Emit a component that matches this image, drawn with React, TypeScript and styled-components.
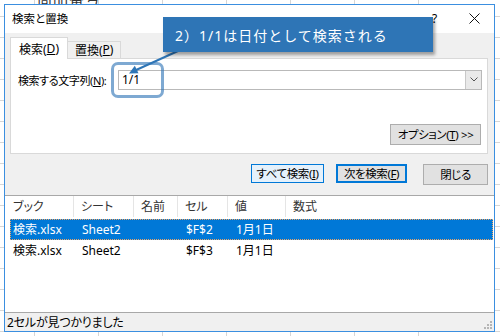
import styled, { createGlobalStyle } from 'styled-components'

const GlobalStyle = createGlobalStyle`
  html, body {
    margin: 0;
    height: 100%;
  }
  body {
    font-family: "Noto Sans", "Noto Sans CJK JP", sans-serif;
    font-feature-settings: "palt";
    font-size: 12px;
    color: #000;
    background-color: #fff;
    background-image:
      repeating-linear-gradient(to right, transparent 0 63px, #d6d6d6 63px 64px),
      repeating-linear-gradient(to bottom, transparent 0 20px, #d6d6d6 20px 21px);
    background-position: -29px 0, 0 -4px;
  }
`

const Sheet = styled.div`
  position: relative;
  width: 500px;
  height: 336px;
  overflow: hidden;
  padding: 4px 0 0 4px;
  box-sizing: border-box;
`

const CellText = styled.div`
  position: absolute;
  top: -13px;
  left: 37px;
  font-size: 15px;
  color: #333;
  letter-spacing: 1px;
`

const Dialog = styled.div`
  position: relative;
  width: 491px;
  height: 328px;
  box-sizing: border-box;
  border: 1px solid #3b8fe0;
  background: #f0f0f0;
  display: flex;
  flex-direction: column;
`

const TitleBar = styled.div`
  height: 28px;
  flex: none;
  background: #fff;
  display: flex;
  align-items: center;
  padding: 0 14px 2px 7px;
  box-sizing: border-box;
`

const Title = styled.div`
  flex: 1;
  font-size: 11.5px;
`

const Help = styled.div`
  width: 37px;
  font-size: 12px;
`

const Body = styled.div`
  flex: 1;
  display: flex;
  flex-direction: column;
  min-height: 0;
  letter-spacing: -0.4px;
`

const Tabs = styled.div`
  display: flex;
  align-items: flex-end;
  height: 26px;
  padding-left: 5px;
  position: relative;
  z-index: 1;
`

const Tab = styled.div<{ $active?: boolean }>`
  box-sizing: border-box;
  height: ${(p) => (p.$active ? '22px' : '18px')};
  padding: 0 ${(p) => (p.$active ? '8px' : '7px')};
  border: 1px solid #d9d9d9;
  border-bottom: ${(p) => (p.$active ? 'none' : '1px solid #d9d9d9')};
  border-left: ${(p) => (p.$active ? '1px solid #d9d9d9' : 'none')};
  background: ${(p) => (p.$active ? '#fff' : '#f0f0f0')};
  display: flex;
  align-items: center;
  padding-top: ${(p) => (p.$active ? '1px' : '0')};
  letter-spacing: 0;
`

const Panel = styled.div`
  margin: -1px 6px 0 5px;
  height: 97px;
  box-sizing: border-box;
  border: 1px solid #d9d9d9;
  background: #fff;
  padding: 11px 5px 0 7px;
  display: flex;
  flex-direction: column;
`

const FieldRow = styled.div`
  display: flex;
  align-items: center;
`

const FieldLabel = styled.div`
  width: 100px;
  flex: none;
  white-space: nowrap;
  font-size: 11px;
  letter-spacing: -0.4px;
`

const Combo = styled.div`
  flex: 1;
  height: 20px;
  box-sizing: border-box;
  border: 1px solid #b9b9b9;
  display: flex;
  align-items: center;
  padding-left: 3px;
  letter-spacing: 0;
`

const ComboText = styled.div`
  flex: 1;
`

const DropButton = styled.div`
  width: 16px;
  height: 18px;
  box-sizing: border-box;
  border-left: 1px solid #c8c8c8;
  background: #e9e9e9;
  display: flex;
  align-items: center;
  justify-content: center;
`

const OptionRow = styled.div`
  display: flex;
  justify-content: flex-end;
  margin-top: 34px;
  padding-right: 1px;
`

const Button = styled.div<{ $width: number; $variant?: 'hover' | 'default' }>`
  width: ${(p) => p.$width}px;
  height: ${(p) => (p.$variant ? 19 : 21)}px;
  box-sizing: border-box;
  display: flex;
  align-items: center;
  justify-content: center;
  font-size: 11.5px;
  background: ${(p) => (p.$variant === 'hover' ? '#e5f1fb' : '#e1e1e1')};
  border: ${(p) =>
    p.$variant === 'hover'
      ? '1px solid #0078d7'
      : p.$variant === 'default'
        ? '2px solid #0078d7'
        : '1px solid #adadad'};
  white-space: nowrap;
`

const ButtonRow = styled.div`
  display: flex;
  justify-content: flex-end;
  margin: 10px 6px 0 0;
  gap: 12px;

  > :last-child {
    margin-left: 4px;
  }
`

const ResultList = styled.div`
  margin-top: 10px;
  height: 120px;
  box-sizing: border-box;
  border-top: 1px solid #a8a8a8;
  border-bottom: 1px solid #a8a8a8;
  background: #fff;
  letter-spacing: 0;
`

const columns = '68px 60px 44px 50px 58px 1fr'

const HeaderRow = styled.div`
  display: grid;
  grid-template-columns: ${columns};
  height: 21px;
  margin-bottom: 2px;
`

const HeaderCell = styled.div`
  display: flex;
  align-items: center;
  padding-left: 7px;
  color: #333;
  border-left: 1px solid #e5e5e5;

  &:first-child {
    border-left: none;
    padding-left: 8px;
  }
`

const Row = styled.div<{ $selected?: boolean }>`
  display: grid;
  grid-template-columns: 63px 60px 44px 50px 58px 1fr;
  height: 21px;
  box-sizing: border-box;
  margin: 0 1px 0 5px;
  background: ${(p) => (p.$selected ? '#0078d7' : 'transparent')};
  color: ${(p) => (p.$selected ? '#fff' : '#000')};
  border: 1px dotted ${(p) => (p.$selected ? '#e9a56a' : 'transparent')};
`

const Cell = styled.div`
  display: flex;
  align-items: center;
  padding-left: 8px;
  white-space: nowrap;

  &:first-child {
    padding-left: 2px;
  }
`

const StatusBar = styled.div`
  flex: 1;
  display: flex;
  align-items: center;
  padding-left: 2px;
  position: relative;
  letter-spacing: -0.2px;
`

const Grip = styled.svg`
  position: absolute;
  right: 1px;
  bottom: 1px;
`

const Callout = styled.div`
  position: absolute;
  left: 163px;
  top: 17px;
  width: 270px;
  height: 35px;
  box-sizing: border-box;
  background: #2e75b6;
  color: #fff;
  font-size: 14px;
  font-feature-settings: normal;
  letter-spacing: 1px;
  padding-left: 12px;
  display: flex;
  align-items: center;
  box-shadow: 2px 3px 3px rgba(0, 0, 0, 0.35);
`

const Highlight = styled.div`
  position: absolute;
  left: 111px;
  top: 62px;
  width: 53px;
  height: 36px;
  box-sizing: border-box;
  border: 3px solid rgba(46, 117, 182, 0.62);
  border-radius: 7px;
`

const Overlay = styled.svg`
  position: absolute;
  left: 0;
  top: 0;
  pointer-events: none;
`

const results = [
  { book: '検索.xlsx', sheet: 'Sheet2', name: '', cell: '$F$2', value: '1月1日', selected: true },
  { book: '検索.xlsx', sheet: 'Sheet2', name: '', cell: '$F$3', value: '1月1日', selected: false },
]

export default function App() {
  return (
    <>
      <GlobalStyle />
      <Sheet>
        <CellText>商品番号</CellText>
        <Dialog>
          <TitleBar>
            <Title>検索と置換</Title>
            <Help>?</Help>
            <svg width="11" height="11" viewBox="0 0 11 11">
              <path d="M0.5 0.5 L10.5 10.5 M10.5 0.5 L0.5 10.5" stroke="#111" strokeWidth="1" />
            </svg>
          </TitleBar>
          <Body>
            <Tabs>
              <Tab $active>
                検索(<u>D</u>)
              </Tab>
              <Tab>
                置換(<u>P</u>)
              </Tab>
            </Tabs>
            <Panel>
              <FieldRow>
                <FieldLabel>
                  検索する文字列(<u>N</u>):
                </FieldLabel>
                <Combo>
                  <ComboText>1/1</ComboText>
                  <DropButton>
                    <svg width="8" height="5" viewBox="0 0 8 5">
                      <path d="M0.5 0.5 L4 4 L7.5 0.5" stroke="#555" strokeWidth="1" fill="none" />
                    </svg>
                  </DropButton>
                </Combo>
              </FieldRow>
              <OptionRow>
                <Button $width={91}>
                  オプション(<u>T</u>) &gt;&gt;
                </Button>
              </OptionRow>
            </Panel>
            <ButtonRow>
              <Button $width={73} $variant="hover">
                すべて検索(<u>I</u>)
              </Button>
              <Button $width={71} $variant="default">
                次を検索(<u>F</u>)
              </Button>
              <Button $width={65}>閉じる</Button>
            </ButtonRow>
            <ResultList>
              <HeaderRow>
                <HeaderCell>ブック</HeaderCell>
                <HeaderCell>シート</HeaderCell>
                <HeaderCell>名前</HeaderCell>
                <HeaderCell>セル</HeaderCell>
                <HeaderCell>値</HeaderCell>
                <HeaderCell>数式</HeaderCell>
              </HeaderRow>
              {results.map((r, i) => (
                <Row key={i} $selected={r.selected}>
                  <Cell>{r.book}</Cell>
                  <Cell>{r.sheet}</Cell>
                  <Cell>{r.name}</Cell>
                  <Cell>{r.cell}</Cell>
                  <Cell>{r.value}</Cell>
                  <Cell></Cell>
                </Row>
              ))}
            </ResultList>
            <StatusBar>
              2セルが見つかりました
              <Grip width="9" height="9" viewBox="0 0 9 9">
                <g fill="#b5b5b5">
                  <rect x="6" y="0" width="2" height="2" />
                  <rect x="3" y="3" width="2" height="2" />
                  <rect x="6" y="3" width="2" height="2" />
                  <rect x="0" y="6" width="2" height="2" />
                  <rect x="3" y="6" width="2" height="2" />
                  <rect x="6" y="6" width="2" height="2" />
                </g>
              </Grip>
            </StatusBar>
          </Body>
        </Dialog>
        <Highlight />
        <Overlay width="500" height="336">
          <line x1="178" y1="51" x2="135" y2="70.5" stroke="#2e75b6" strokeWidth="2" />
          <polygon points="129,73.5 138.5,73.2 134.8,65.8" fill="#2e75b6" />
        </Overlay>
        <Callout>2）1/1は日付として検索される</Callout>
      </Sheet>
    </>
  )
}
